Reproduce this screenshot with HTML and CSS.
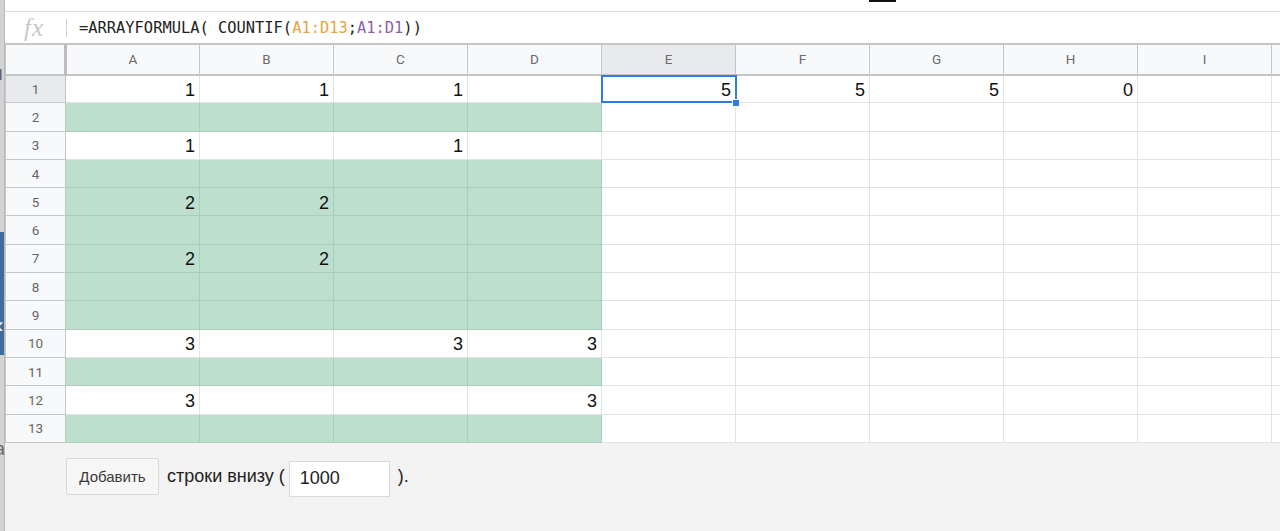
FILE: index.html
```
<html>
  <head>
    <meta charset="UTF-8">
    <link rel="stylesheet" href="styles.css">
  </head>
  <body>
    <div class="page">
      <div class="edge">
        <span class="edge-one">1</span>
        <div class="edge-tab">&lsaquo;</div>
        <span class="edge-a">a</span>
      </div>

      <div class="main">
        <div class="topbar"><span class="topbar-mark"></span></div>

        <div class="formula">
          <span class="fx">fx</span>
          <span class="fsep"></span>
          <span class="ftext">=ARRAYFORMULA( COUNTIF(<span class="ref1">A1:D13</span>;<span class="ref2">A1:D1</span>))</span>
        </div>

        <table class="sheet">
          <colgroup>
            <col class="c-rowhead">
            <col class="c-col"><col class="c-col"><col class="c-col">
            <col class="c-col"><col class="c-col"><col class="c-col">
            <col class="c-col"><col class="c-col"><col class="c-col">
            <col class="c-rest">
          </colgroup>
          <tr class="head">
            <th class="corner"></th>
            <th>A</th><th>B</th><th>C</th><th>D</th>
            <th class="hl">E</th><th>F</th><th>G</th><th>H</th><th>I</th><th></th>
          </tr>
          <tr>
            <th class="hl">1</th>
            <td>1</td><td>1</td><td>1</td><td></td>
            <td class="sel">5</td><td>5</td><td>5</td><td>0</td><td></td><td></td>
          </tr>
          <tr>
            <th>2</th>
            <td class="g"></td><td class="g"></td><td class="g"></td><td class="g"></td>
            <td></td><td></td><td></td><td></td><td></td><td></td>
          </tr>
          <tr>
            <th>3</th>
            <td>1</td><td></td><td>1</td><td></td>
            <td></td><td></td><td></td><td></td><td></td><td></td>
          </tr>
          <tr>
            <th>4</th>
            <td class="g"></td><td class="g"></td><td class="g"></td><td class="g"></td>
            <td></td><td></td><td></td><td></td><td></td><td></td>
          </tr>
          <tr>
            <th>5</th>
            <td class="g">2</td><td class="g">2</td><td class="g"></td><td class="g"></td>
            <td></td><td></td><td></td><td></td><td></td><td></td>
          </tr>
          <tr>
            <th>6</th>
            <td class="g"></td><td class="g"></td><td class="g"></td><td class="g"></td>
            <td></td><td></td><td></td><td></td><td></td><td></td>
          </tr>
          <tr>
            <th>7</th>
            <td class="g">2</td><td class="g">2</td><td class="g"></td><td class="g"></td>
            <td></td><td></td><td></td><td></td><td></td><td></td>
          </tr>
          <tr>
            <th>8</th>
            <td class="g"></td><td class="g"></td><td class="g"></td><td class="g"></td>
            <td></td><td></td><td></td><td></td><td></td><td></td>
          </tr>
          <tr>
            <th>9</th>
            <td class="g"></td><td class="g"></td><td class="g"></td><td class="g"></td>
            <td></td><td></td><td></td><td></td><td></td><td></td>
          </tr>
          <tr>
            <th>10</th>
            <td>3</td><td></td><td>3</td><td>3</td>
            <td></td><td></td><td></td><td></td><td></td><td></td>
          </tr>
          <tr>
            <th>11</th>
            <td class="g"></td><td class="g"></td><td class="g"></td><td class="g"></td>
            <td></td><td></td><td></td><td></td><td></td><td></td>
          </tr>
          <tr>
            <th>12</th>
            <td>3</td><td></td><td></td><td>3</td>
            <td></td><td></td><td></td><td></td><td></td><td></td>
          </tr>
          <tr>
            <th>13</th>
            <td class="g"></td><td class="g"></td><td class="g"></td><td class="g"></td>
            <td></td><td></td><td></td><td></td><td></td><td></td>
          </tr>
        </table>

        <div class="addrows">
          <button class="add-btn">Добавить</button>
          <span class="add-label">строки внизу (</span>
          <input class="add-count" value="1000">
          <span class="add-label">).</span>
        </div>
      </div>
    </div>
  </body>
</html>
```

FILE: styles.css
```
body {
  margin: 0;
  background: #f3f3f3;
  font-family: "Liberation Sans", Arial, sans-serif;
  overflow: hidden;
}

.page {
  display: flex;
  height: 531px;
}

/* strip of the window behind, on the left */
.edge {
  width: 4px;
  border-right: 1px solid #b9b9b9;
  background: #d3d3d3;
  display: flex;
  flex-direction: column;
  overflow: hidden;
  flex-shrink: 0;
}

.edge-one {
  margin-top: 66px;
  margin-left: -4px;
  font-family: Roboto, sans-serif;
  font-size: 15px;
  color: #555;
  line-height: 18px;
}

.edge-tab {
  margin-top: 148px;
  height: 123px;
  background: #3e6c9c;
  color: #fff;
  font-size: 22px;
  line-height: 20px;
  padding-top: 84px;
  box-sizing: border-box;
  text-indent: -4px;
}

.edge-a {
  margin-top: 84px;
  margin-left: -5px;
  font-size: 18px;
  color: #666;
}

.main {
  flex: 1;
  display: flex;
  flex-direction: column;
  min-width: 0;
}

.topbar {
  height: 11px;
  background: #fff;
  border-bottom: 1px solid #dadce0;
}

.topbar-mark {
  display: block;
  margin-left: 864px;
  width: 27px;
  height: 2px;
  background: #111;
}

.formula {
  height: 31px;
  background: #fff;
  border-bottom: 1px solid #c4c4c4;
  display: flex;
  align-items: center;
}

.fx {
  margin-left: 19px;
  width: 42px;
  font-family: "Liberation Serif", serif;
  font-style: italic;
  font-size: 25px;
  letter-spacing: 1px;
  color: #c8c8c8;
}

.fsep {
  width: 1px;
  height: 18px;
  background: #d0d0d0;
}

.ftext {
  margin-left: 12px;
  font-family: "DejaVu Sans Mono", monospace;
  font-size: 15.4px;
  color: #222;
}

.ref1 {
  color: #e8a33c;
}

.ref2 {
  color: #8c5fa8;
}

table.sheet {
  table-layout: fixed;
  border-collapse: collapse;
  width: 1275px;
  background: #fff;
}

.c-rowhead {
  width: 60px;
}

.c-col {
  width: 134px;
}

.c-rest {
  width: 9px;
}

th {
  font-family: Roboto, sans-serif;
  font-weight: normal;
  font-size: 13.5px;
  color: #666;
  background: #f8f9fa;
  border: 1px solid #c4c7c5;
  padding: 0;
  text-align: center;
}

tr.head th {
  height: 30px;
  border-bottom: 2px solid #c4c7c5;
  color: #6b6b6b;
}

th.corner {
  border-right: 3px solid #bdbdbd;
  border-bottom: 3px solid #bdbdbd;
}

th.hl {
  background: #e8eaed;
}

td {
  height: 28.3px;
  padding: 3px 4px 0 0;
  border: 1px solid #e2e3e3;
  text-align: right;
  font-size: 18px;
  color: #111;
  white-space: nowrap;
  overflow: hidden;
}

td.g {
  background: #bedfcd;
  border-color: #a8cfb9;
}

td.sel {
  position: relative;
  overflow: visible;
}

td.sel::after {
  content: "";
  position: absolute;
  top: -1px;
  left: -1px;
  right: -2px;
  bottom: -1px;
  border: 2px solid #2f7ae5;
}

td.sel::before {
  content: "";
  position: absolute;
  right: -5px;
  bottom: -5px;
  width: 6px;
  height: 6px;
  background: #2f7ae5;
  border: 1px solid #fff;
  z-index: 1;
}

.addrows {
  display: flex;
  align-items: center;
  padding: 14px 0 0 61px;
}

.add-btn {
  width: 93px;
  height: 37px;
  background: #f6f6f6;
  border: 1px solid #d8d8d8;
  border-radius: 2px;
  font-family: "Liberation Sans", Arial, sans-serif;
  font-size: 15px;
  color: #3a3a3a;
  padding: 0;
}

.add-label {
  margin-left: 8px;
  font-size: 18px;
  color: #222;
}

.add-count {
  margin: 4px 0 0 4px;
  width: 101px;
  height: 36px;
  box-sizing: border-box;
  border: 1px solid #dadada;
  background: #fff;
  padding: 0 0 0 10px;
  font-family: "Liberation Sans", Arial, sans-serif;
  font-size: 18px;
  color: #222;
}
```
